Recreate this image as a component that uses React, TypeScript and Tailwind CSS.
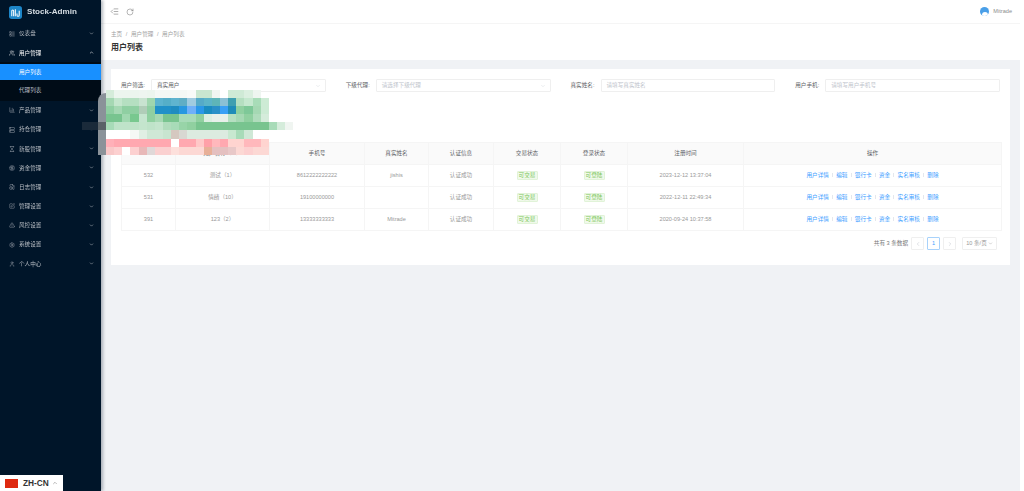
import {
  BadgeDollarSign,
  ChartColumn,
  ChevronDown,
  ChevronLeft,
  ChevronRight,
  ChevronUp,
  FileClock,
  Hourglass,
  IndentDecrease,
  LayoutList,
  RotateCw,
  Server,
  Settings,
  SquarePen,
  TriangleAlert,
  User,
  Users,
} from "lucide-react";

const font = "font-['Liberation_Sans','Noto_Sans_CJK_SC',sans-serif]";

const topMenu = [
  { label: "仪表盘", Icon: LayoutList },
  { label: "用户管理", Icon: Users, open: true },
];

const restMenu = [
  { label: "产品管理", Icon: ChartColumn },
  { label: "持仓管理", Icon: Server },
  { label: "新股管理", Icon: Hourglass },
  { label: "资金管理", Icon: BadgeDollarSign },
  { label: "日志管理", Icon: FileClock },
  { label: "管理设置", Icon: SquarePen },
  { label: "风控设置", Icon: TriangleAlert },
  { label: "系统设置", Icon: Settings },
  { label: "个人中心", Icon: User },
];

const users = [
  { id: "532", name: "测试（1）", phone: "8612222222222", real: "jishis", time: "2023-12-12 13:37:04" },
  { id: "531", name: "情绪（10）", phone: "19100000000", real: "", time: "2022-12-11 22:49:34" },
  { id: "391", name: "123（2）", phone: "13333333333", real: "Mitrade", time: "2020-09-24 10:37:58" },
];

const actions = ["用户详情", "编辑", "银行卡", "资金", "实名审核", "删除"];

// censored block from the screenshot, one row per 8px band
const mosaic = [
  ["#d5ecda", "#ecf5ee", "#ecf5ee", "#ecf5ee", "#eef5f0", "#ecf5ee", "#f4f8f5", "#f4f8f5", "#f4f8f5", "#f4f8f5", "#f8faf8", "#c9e6d0", "#c9e6d0", "#f0f5f1", "#fff", "#cfead6", "#cfead6", "#dbefe0", "#eef5f0"],
  ["#a5d8b3", "#c4e6cd", "#b5dfc1", "#b5dfc1", "#c8e3d0", "#9fd6ae", "#5cb3cf", "#55aec8", "#5fb4cf", "#60aec5", "#a0cbe0", "#55aac8", "#5cb4c8", "#5eb5b8", "#8bc0d5", "#3f9fb0", "#b5dfc1", "#c5e8cf", "#a8dcb8", "#cdebd5"],
  ["#8fcfa2", "#a5d8b3", "#8fcfa2", "#8fcfa2", "#b0cdb8", "#8fcfa2", "#2090c8", "#2090c8", "#1f8cc0", "#2898e0", "#70b0f8", "#2a98e8", "#1a8cc0", "#2a90c8", "#3aa0f5", "#1f8cb8", "#8fd0a0", "#7ec898", "#a5d8b3", "#cdebd5"],
  ["#78c48f", "#78c48f", "#a0d8b0", "#78c88f", "#c5e5cf", "#90d0a0", "#a5d8b3", "#78c48f", "#78c48f", "#a8dbb8", "#a8dbb8", "#90d0a0", "#dcefe2", "#e8f0ea", "#e8f0ea", "#b5dfc1", "#a5d8b3", "#90d0a0", "#b0dcbc", "#d5ecdb"],
  ["#a8dbb8", "#bfe3c9", "#bfe3c9", "#bfe3c9", "#c4e5cd", "#bfe3c9", "#c4e5cd", "#b0dcbc", "#a8dbb8", "#98d4a8", "#90d0a0", "#78c48f", "#78c48f", "#78c48f", "#78c48f", "#78c48f", "#78c48f", "#78c48f", "#78c48f", "#78c48f", "#a8dbb8", "#d5ecdb", "#f0f5f1"],
  ["#fff", "#fff", "#fff", "#f5f8f5", "#e0efe4", "#cfe8d6", "#cfe8d6", "#c8e5d0", "#d5c8c0", "#d8d8d2", "#dcebe0", "#dcebe0", "#dcebe0", "#dcebe0", "#dcebe0", "#c8e8d0", "#a8dbb8", "#cfe8d6", "#fff", "#fff"],
  ["#ffb0b8", "#ffa8b0", "#ffa8b0", "#ffa8b0", "#ffa8b0", "#ffa8b0", "#ffa8b0", "#ffa8b0", "#fff", "#ffa8b0", "#ffa8b0", "#ffc8c8", "#ffa0a8", "#ffb8bc", "#ffa8b0", "#ffd4d0", "#ffd4d0", "#ffb8bc", "#ffb8bc", "#ffd4d0"],
  ["#f8c8c8", "#fcd0d0", "#fff", "#fcd0d0", "#e8b8b8", "#e0d8d8", "#fad0d0", "#fad0d0", "#fde0dc", "#fcd8d4", "#fcd8d4", "#fcd8d4", "#e8b098", "#e4c0c0", "#e4c0c0", "#e8c8c8", "#fcd8d4", "#fcd0d0", "#fcd8d4", "#fcd8d4"],
];

function Logo() {
  return (
    <svg viewBox="0 0 14 14" className="h-[13px] w-[13px] shrink-0">
      <rect width="14" height="14" rx="3" fill="#1d86c8" />
      <path d="M3 11V5.5C3 4 5 4 5 5.5V11M6.8 11V3.5M8.6 8V10C8.6 11.5 11 11.5 11 10V5" fill="none" stroke="#fff" strokeWidth="1.1" />
    </svg>
  );
}

function Sidebar() {
  return (
    <aside className="relative z-10 flex w-[101px] shrink-0 flex-col bg-[#001529] shadow-[2px_0_3px_rgba(0,21,41,0.3)]">
      <div className="flex h-6 items-center gap-[5px] pl-[9px]">
        <Logo />
        <span className="text-[8.1px] font-bold text-[#d5dde3]">Stock-Admin</span>
      </div>
      {topMenu.map(({ label, Icon, open }) => (
        <div key={label} className={`flex h-[19.2px] items-center pl-[9px] pr-[7px] ${open ? "text-white" : "text-[#b8bec4]"}`}>
          <Icon size={6} strokeWidth={1.6} />
          <span className="ml-1 flex-1 text-[5.6px]">{label}</span>
          {open ? <ChevronUp size={5} strokeWidth={2.6} /> : <ChevronDown size={5} strokeWidth={2.6} />}
        </div>
      ))}
      <div className="bg-[#000c17] pt-[1.6px]">
        <div className="flex h-4 items-center bg-[#1890ff] pl-[19px] text-[5.6px] text-white">用户列表</div>
        <div className="flex h-[20.8px] items-center pl-[19px] text-[5.6px] text-[#b8bec4]">代理列表</div>
      </div>
      {restMenu.map(({ label, Icon }) => (
        <div key={label} className="flex h-[19.2px] items-center pl-[9px] pr-[7px] text-[#b8bec4]">
          <Icon size={6} strokeWidth={1.6} />
          <span className="ml-1 flex-1 text-[5.6px]">{label}</span>
          <ChevronDown size={5} strokeWidth={2.6} />
        </div>
      ))}
    </aside>
  );
}

function TopBar() {
  return (
    <header className="flex h-6 items-center border-b border-[#f5f5f5] bg-white pl-[9px] pr-2">
      <IndentDecrease size={9} strokeWidth={1.4} className="text-[#666]" />
      <RotateCw size={8} strokeWidth={1.4} className="ml-[7px] text-[#666]" />
      <div className="ml-auto flex items-center gap-1">
        <span className="flex h-[9px] w-[9px] items-end justify-center overflow-hidden rounded-full bg-[#4a9fe8]">
          <span className="h-1 w-[6px] rounded-t-full bg-white" />
        </span>
        <span className="text-[5.6px] text-[#8c8c8c]">Mitrade</span>
      </div>
    </header>
  );
}

function Filter({ label, placeholder, value, select }: { label: string; placeholder?: string; value?: string; select?: boolean }) {
  return (
    <div className="flex items-center">
      <span className="w-[30px] shrink-0 text-[5.6px] text-[#606266]">{label}</span>
      <div className="flex h-[13px] flex-1 items-center rounded-[1px] border border-[#efefef] bg-white pl-[5px] pr-1 text-[5.6px]">
        <span className={value ? "text-[#606266]" : "text-[#c0c4cc]"}>{value ?? placeholder}</span>
        {select && <ChevronDown size={6} strokeWidth={1.2} className="ml-auto text-[#c0c4cc]" />}
      </div>
    </div>
  );
}

function Tag({ children }: { children: string }) {
  return (
    <span className="inline-flex h-[9px] w-[21px] items-center justify-center rounded-[1px] border border-[#e1f3d8] bg-[#f0f9eb] text-[5.6px] text-[#7cc75a]">
      {children}
    </span>
  );
}

function UserTable() {
  const th = "border border-[#f5f5f5] bg-[#fafafa] font-normal text-[#606266]";
  const td = "border border-[#f5f5f5] text-[#999]";
  return (
    <table className="w-[880px] table-fixed border-collapse text-center text-[5.6px]">
      <colgroup>
        <col className="w-[54px]" />
        <col className="w-[94px]" />
        <col className="w-[95px]" />
        <col className="w-[64px]" />
        <col className="w-[65px]" />
        <col className="w-[67px]" />
        <col className="w-[67px]" />
        <col className="w-[116px]" />
        <col className="w-[258px]" />
      </colgroup>
      <thead>
        <tr className="h-[22px]">
          {["ID", "用户名称（Id）", "手机号", "真实姓名", "认证信息", "交易状态", "登录状态", "注册时间", "操作"].map((h) => (
            <th key={h} className={th}>{h}</th>
          ))}
        </tr>
      </thead>
      <tbody>
        {users.map((u) => (
          <tr key={u.id} className="h-[22px]">
            <td className={td}>{u.id}</td>
            <td className={td}>{u.name}</td>
            <td className={td}>{u.phone}</td>
            <td className={td}>{u.real}</td>
            <td className={td}>认证成功</td>
            <td className={td}><Tag>可交易</Tag></td>
            <td className={td}><Tag>可登陆</Tag></td>
            <td className={td}>{u.time}</td>
            <td className={td}>
              <div className="flex items-center justify-center text-[#409eff]">
                {actions.map((a, i) => (
                  <span key={a} className="flex items-center">
                    {i > 0 && <span className="mx-[3.2px] h-1 w-px bg-[#e4e7ed]" />}
                    {a}
                  </span>
                ))}
              </div>
            </td>
          </tr>
        ))}
      </tbody>
    </table>
  );
}

function Pagination() {
  const box = "flex h-[13px] w-[13px] items-center justify-center rounded-[1px] border";
  return (
    <div className="mt-[6px] flex items-center justify-end pr-[3px] text-[5.6px] text-[#777]">
      <span>共有 3 条数据</span>
      <span className={`${box} ml-[3px] border-[#efefef] text-[#c0c4cc]`}><ChevronLeft size={6} /></span>
      <span className={`${box} ml-[3px] border-[#a8d2fb] text-[#409eff]`}>1</span>
      <span className={`${box} ml-[3px] border-[#efefef] text-[#c0c4cc]`}><ChevronRight size={6} /></span>
      <span className="ml-[6px] flex h-[13px] w-[35px] items-center justify-center gap-px rounded-[1px] border border-[#efefef] text-[#999]">
        10 条/页
        <ChevronDown size={5} />
      </span>
    </div>
  );
}

function Mosaic() {
  return (
    <>
      <div className="absolute left-[98px] top-[93px] z-20 h-[62px] w-2 rounded-tl-[8px] bg-[#8a9299]" />
      <div className="absolute left-[82px] top-[122px] z-20 h-2 w-4 bg-[#1a2a3a]" />
      <div className="absolute left-[98px] top-[122px] z-20 h-2 w-2 bg-[#5a6268]" />
      <div className="absolute left-[106px] top-[90px] z-20 flex flex-col">
        {mosaic.map((row, r) => (
          <div key={r} className="flex h-[8.1px]">
            {row.map((c, i) => (
              <div key={i} className="h-full w-[8.15px]" style={{ backgroundColor: c }} />
            ))}
          </div>
        ))}
      </div>
    </>
  );
}

export default function App() {
  return (
    <div className={`relative flex h-[491px] w-[1020px] overflow-hidden blur-[0.5px] ${font}`}>
      <Sidebar />
      <main className="flex min-w-0 flex-1 flex-col bg-[#f0f2f5]">
        <TopBar />
        <div className="h-9 bg-white pl-[10px] pt-[6px]">
          <div className="flex gap-[3.6px] text-[5.6px] text-[#a0a0a0]">
            <span>主页</span>
            <span>/</span>
            <span>用户管理</span>
            <span>/</span>
            <span>用户列表</span>
          </div>
          <h1 className="mt-1 text-[8px] font-bold text-[#333]">用户列表</h1>
        </div>
        <section className="mx-[10px] mt-[9px] h-[196px] bg-white px-[10px] pt-[10px]">
          <div className="grid grid-cols-4 gap-5">
            <Filter label="用户筛选:" value="真实用户" select />
            <Filter label="下级代理:" placeholder="请选择下级代理" select />
            <Filter label="真实姓名:" placeholder="请填写真实姓名" />
            <Filter label="用户手机:" placeholder="请填写用户手机号" />
          </div>
          <div className="mt-[50px]">
            <UserTable />
            <Pagination />
          </div>
        </section>
      </main>
      <Mosaic />
      <div className="absolute bottom-0 left-0 z-30 flex h-4 w-[63px] items-center bg-white pl-[5px] text-[#333]">
        <span className="h-[9px] w-[13px] bg-[#de2910]" />
        <span className="ml-[5px] text-[8.3px] font-bold">ZH-CN</span>
        <ChevronUp size={6} className="ml-[3px] text-[#777]" />
      </div>
    </div>
  );
}
